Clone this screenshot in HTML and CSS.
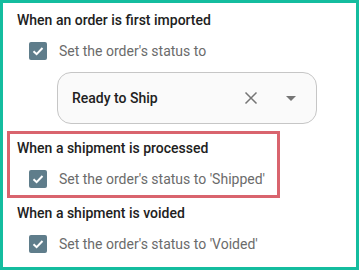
FILE: index.html
```html
<!DOCTYPE html>
<html>
<head>
    <title>Order status settings</title>
    <link rel="stylesheet" href="styles.css">
</head>
<body>
    <div class="panel">
        <div class="section">
            <h3>When an order is first imported</h3>
            <label class="option">
                <span class="check">
                    <svg width="14" height="14" viewBox="0 0 14 14"><path d="M2.5 7.2 L5.6 10.2 L11.5 4" fill="none" stroke="#fff" stroke-width="2"/></svg>
                </span>
                Set the order's status to
            </label>
            <div class="select">
                <span class="select-value">Ready to Ship</span>
                <svg class="clear" width="14" height="14" viewBox="0 0 14 14"><path d="M1.5 1.5 L12.5 12.5 M12.5 1.5 L1.5 12.5" stroke="#757575" stroke-width="1.5"/></svg>
                <span class="caret"></span>
            </div>
        </div>
        <div class="section highlight">
            <h3>When a shipment is processed</h3>
            <label class="option">
                <span class="check">
                    <svg width="14" height="14" viewBox="0 0 14 14"><path d="M2.5 7.2 L5.6 10.2 L11.5 4" fill="none" stroke="#fff" stroke-width="2"/></svg>
                </span>
                Set the order's status to 'Shipped'
            </label>
        </div>
        <div class="section last">
            <h3>When a shipment is voided</h3>
            <label class="option">
                <span class="check">
                    <svg width="14" height="14" viewBox="0 0 14 14"><path d="M2.5 7.2 L5.6 10.2 L11.5 4" fill="none" stroke="#fff" stroke-width="2"/></svg>
                </span>
                Set the order's status to 'Voided'
            </label>
        </div>
    </div>
</body>
</html>
```

FILE: styles.css
```css
body {
    margin: 0;
    font-family: Roboto, "Liberation Sans", sans-serif;
    background: #fff;
}
.panel {
    width: 359px;
    height: 270px;
    box-sizing: border-box;
    border: 3px solid #14bd9f;
    padding: 0 4px;
}
.section {
    border: 3px solid transparent;
    padding: 4px 7px 4px;
}
.section.highlight {
    border-color: #d9646e;
    width: 273px;
    box-sizing: border-box;
}
.section.last {
    padding-top: 2px;
}
.section h3 {
    margin: 0;
    font-size: 14px;
    line-height: 20px;
    font-weight: 500;
    color: #212121;
}
.option {
    display: flex;
    align-items: center;
    height: 24px;
    margin-top: 9px;
    padding-left: 12px;
    font-size: 14px;
    color: #6b6b6b;
}
.check {
    width: 18px;
    height: 18px;
    border-radius: 2px;
    background: #5f7d8b;
    display: flex;
    align-items: center;
    justify-content: center;
    margin-right: 12px;
}
.select {
    display: flex;
    align-items: center;
    width: 260px;
    height: 52px;
    box-sizing: border-box;
    margin: 9px 0 0 40px;
    padding: 0 20px 0 14px;
    border: 1px solid #c6c6c6;
    border-radius: 14px;
    background: #fafafa;
}
.select-value {
    flex: 1;
    font-size: 14px;
    font-weight: 500;
    color: #212121;
}
.clear {
    margin-right: 28px;
}
.caret {
    width: 0;
    height: 0;
    border-left: 5px solid transparent;
    border-right: 5px solid transparent;
    border-top: 5px solid #757575;
}
```
